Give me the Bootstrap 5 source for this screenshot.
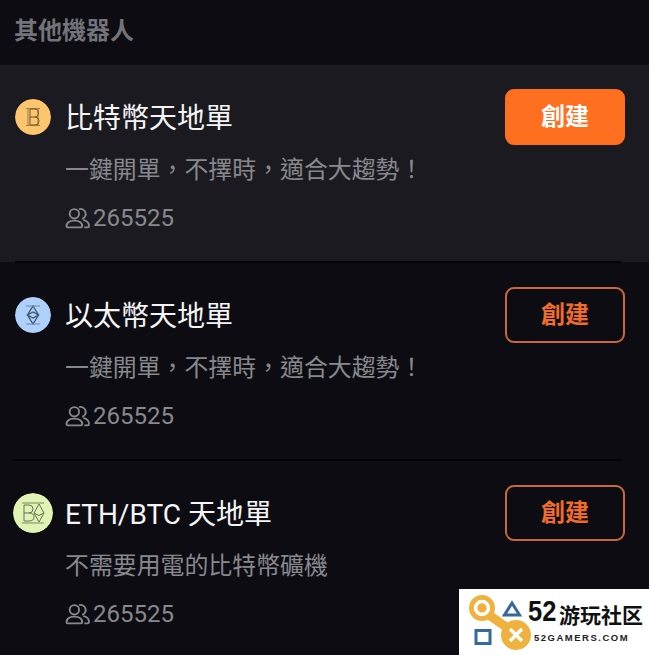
<!DOCTYPE html>
<html lang="zh-Hant">
<head>
    <meta charset="UTF-8">
    <meta name="viewport" content="width=device-width, initial-scale=1">
    <title>其他機器人</title>
    <link href="https://cdn.jsdelivr.net/npm/bootstrap@5.3.0/dist/css/bootstrap.min.css" rel="stylesheet">
    <style>
        html, body { height: 100%; }
        body { background: #0c0c12; overflow: hidden; font-family: "Roboto", "Noto Sans CJK TC", sans-serif; }
        .screen { height: 655px; overflow: hidden; }
        .section-head { height: 65px; padding: 15px 0 0 14px; font-size: 24px; line-height: 32px; font-weight: 700; color: #737479; }
        .bot-row { height: 198px; padding: 25px 24px 0 65px; position: relative; }
        .bot-row.is-active { height: 197px; padding-top: 24px; background: #1a1a20; }
        .bot-row.has-line::after { content: ""; position: absolute; left: 15px; right: 28px; bottom: -1px; height: 2px; background: #040406; }
        .coin { position: absolute; left: 15px; top: 35px; width: 36px; height: 36px; border-radius: 50%; }
        .is-active .coin { top: 34px; }
        .coin.coin-lg { left: 13px; top: 33px; width: 40px; height: 40px; }
        .bot-title { font-size: 28px; line-height: 56px; height: 56px; padding-top: 2px; color: #f5f5f6; font-weight: 400; margin: 0; }
        .bot-desc { font-size: 23.9px; line-height: 34px; color: #88898d; margin-top: 8px; }
        .bot-count { font-size: 24px; line-height: 32px; color: #88898d; margin-top: 15px; gap: 3px; }
        .btn-make { width: 120px; height: 56px; padding: 0; border-radius: 9px; font-size: 24px; font-weight: 700; line-height: 1; border: 2px solid #c9693a; color: #ef6c2b; background: transparent; }
        .btn-make.is-solid { background: #ff6f20; border-color: #ff6f20; color: #fff; }
        .site-mark { position: absolute; right: 0; top: 589px; width: 190px; height: 66px; background: #fff; }
        .mark-name { font-family: "Liberation Sans", "Noto Sans CJK SC", sans-serif; color: #111; font-weight: 700; line-height: 1; white-space: nowrap; }
        .mark-num { font-size: 30px; transform: scaleX(.85); transform-origin: left bottom; width: 27px; }
        .mark-cn { font-size: 21px; margin-left: 4px; }
        .mark-url { font-size: 9.500px; letter-spacing: 1.500px; color: #222; margin: 7px 0 0 6px; }
        .mark-text { position: absolute; left: 69px; top: 7px; }
        .mark-svg { position: absolute; left: 10px; top: 4px; }
    </style>
</head>
<body>

<div class="screen position-relative">
    <div class="section-head">其他機器人</div>

    <div class="bot-row is-active has-line d-flex justify-content-between">
        <svg class="coin" viewBox="0 0 36 36">
            <circle cx="18" cy="18" r="18" fill="#fcc56e"/>
            <path d="M11 9.500h14M11 26.500h14M13 9.500v17M23 9.500v17" fill="none" stroke="#a07f45" stroke-width="1"/>
            <path d="M15 10v16M15 10h5q3.500 0 3.500 4t-3.500 4h-5M20 18q4 0 4 4t-4 4h-5" fill="none" stroke="#6f5530" stroke-width="1"/>
        </svg>
        <div>
            <h2 class="bot-title">比特幣天地單</h2>
            <div class="bot-desc">一鍵開單，不擇時，適合大趨勢！</div>
            <div class="bot-count d-flex align-items-center">
                <svg width="25" height="22" viewBox="0 0 24 20" fill="none" stroke="#88898d" stroke-width="1.800"><circle cx="9" cy="6" r="4.500"/><path d="M1.500 18c0-3.500 3-5.500 7.500-5.500s7.500 2 7.500 5.500c0 .6-.4 1-1 1h-13c-.6 0-1-.4-1-1z"/><path d="M13.500 1.500a4.700 4.700 0 0 1 3 9.300M17.500 12c3 .5 5.500 2.500 5.500 5.500 0 .8-.5 1.500-1.500 1.500h-3"/></svg>
                265525
            </div>
        </div>
        <button class="btn btn-make is-solid">創建</button>
    </div>

    <div class="bot-row has-line d-flex justify-content-between">
        <svg class="coin" viewBox="0 0 36 36">
            <circle cx="18" cy="18" r="18" fill="#afd0fa"/>
            <path d="M18 9l5.500 9-5.500 9-5.500-9zM12.500 18l5.500 3 5.500-3-5.500-3z" fill="none" stroke="#3c5570" stroke-width="1.300"/>
            <path d="M11 9h14M11 27h14" stroke="#6d89a8" stroke-width="1"/>
        </svg>
        <div>
            <h2 class="bot-title">以太幣天地單</h2>
            <div class="bot-desc">一鍵開單，不擇時，適合大趨勢！</div>
            <div class="bot-count d-flex align-items-center">
                <svg width="25" height="22" viewBox="0 0 24 20" fill="none" stroke="#88898d" stroke-width="1.800"><circle cx="9" cy="6" r="4.500"/><path d="M1.500 18c0-3.500 3-5.500 7.500-5.500s7.500 2 7.500 5.500c0 .6-.4 1-1 1h-13c-.6 0-1-.4-1-1z"/><path d="M13.500 1.500a4.700 4.700 0 0 1 3 9.300M17.500 12c3 .5 5.500 2.500 5.500 5.500 0 .8-.5 1.500-1.500 1.500h-3"/></svg>
                265525
            </div>
        </div>
        <button class="btn btn-make">創建</button>
    </div>

    <div class="bot-row d-flex justify-content-between">
        <svg class="coin coin-lg" viewBox="0 0 40 40">
            <circle cx="20" cy="20" r="20" fill="#e2f4b5"/>
            <path d="M9 10h22M9 30h22" stroke="#7b8a63" stroke-width="1"/>
            <path d="M11 12v16M11 12h5q4 0 4 4t-4 4q5 0 5 4t-5 4h-5M11 20h5" fill="none" stroke="#66735a" stroke-width="1"/>
            <path d="M26 11l5 9-5 9-5-9zM21 20l5 2.500 5-2.500" fill="none" stroke="#66735a" stroke-width="1"/>
        </svg>
        <div>
            <h2 class="bot-title">ETH/BTC 天地單</h2>
            <div class="bot-desc">不需要用電的比特幣礦機</div>
            <div class="bot-count d-flex align-items-center">
                <svg width="25" height="22" viewBox="0 0 24 20" fill="none" stroke="#88898d" stroke-width="1.800"><circle cx="9" cy="6" r="4.500"/><path d="M1.500 18c0-3.500 3-5.500 7.500-5.500s7.500 2 7.500 5.500c0 .6-.4 1-1 1h-13c-.6 0-1-.4-1-1z"/><path d="M13.500 1.500a4.700 4.700 0 0 1 3 9.300M17.500 12c3 .5 5.500 2.500 5.500 5.500 0 .8-.5 1.500-1.500 1.500h-3"/></svg>
                265525
            </div>
        </div>
        <button class="btn btn-make">創建</button>
    </div>

    <div class="site-mark">
        <svg class="mark-svg" width="64" height="60" viewBox="0 0 64 60">
            <circle cx="13" cy="15" r="13" fill="#f1b13f"/>
            <circle cx="47" cy="42" r="15" fill="#f1b13f"/>
            <path d="M20 22l20 14" stroke="#f1b13f" stroke-width="9"/>
            <circle cx="13" cy="15" r="6.500" fill="none" stroke="#fff" stroke-width="3.500"/>
            <path d="M41 36l12 12M53 36l-12 12" stroke="#fff" stroke-width="3.500"/>
            <path d="M43 10l7.500 12h-15z" fill="none" stroke="#33699b" stroke-width="3"/>
            <rect x="7" y="37.500" width="14" height="13" fill="none" stroke="#33699b" stroke-width="3"/>
        </svg>
        <div class="mark-text">
            <div class="mark-name d-flex align-items-end"><span class="mark-num d-block">52</span><span class="mark-cn">游玩社区</span></div>
            <div class="mark-name mark-url">52GAMERS.COM</div>
        </div>
    </div>
</div>

<script src="https://cdn.jsdelivr.net/npm/bootstrap@5.3.0/dist/js/bootstrap.bundle.min.js"></script>
</body>
</html>
